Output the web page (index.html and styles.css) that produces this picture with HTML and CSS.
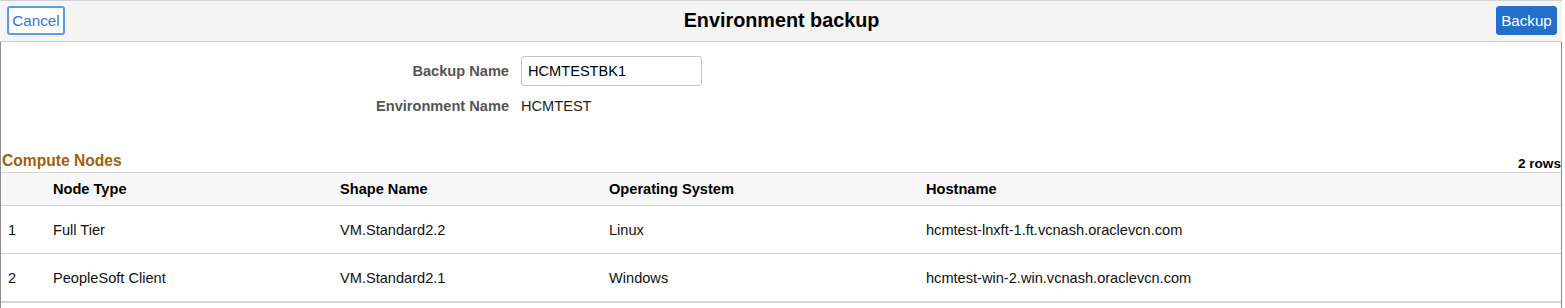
FILE: index.html
```html
<!DOCTYPE html>
<html>
<head>
<meta charset="utf-8">
<link rel="stylesheet" href="styles.css">
</head>
<body>
<div class="page">
  <header class="topbar">
    <button class="btn btn-cancel">Cancel</button>
    <h1 class="title">Environment backup</h1>
    <button class="btn btn-primary">Backup</button>
  </header>
  <main class="content">
    <div class="form">
      <label class="form-label">Backup Name</label>
      <div class="form-field"><input class="text-input" type="text" value="HCMTESTBK1"></div>
      <label class="form-label">Environment Name</label>
      <div class="form-field form-value">HCMTEST</div>
    </div>
    <div class="grid-head">
      <h2 class="section-title">Compute Nodes</h2>
      <span class="row-count">2 rows</span>
    </div>
    <table class="grid">
      <thead>
        <tr>
          <th class="c-idx"></th>
          <th class="c-type">Node Type</th>
          <th class="c-shape">Shape Name</th>
          <th class="c-os">Operating System</th>
          <th class="c-host">Hostname</th>
        </tr>
      </thead>
      <tbody>
        <tr>
          <td>1</td>
          <td>Full Tier</td>
          <td>VM.Standard2.2</td>
          <td>Linux</td>
          <td>hcmtest-lnxft-1.ft.vcnash.oraclevcn.com</td>
        </tr>
        <tr class="last">
          <td>2</td>
          <td>PeopleSoft Client</td>
          <td>VM.Standard2.1</td>
          <td>Windows</td>
          <td>hcmtest-win-2.win.vcnash.oraclevcn.com</td>
        </tr>
      </tbody>
    </table>
  </main>
</div>
</body>
</html>
```
FILE: styles.css
```css
html, body {
  margin: 0;
  padding: 0;
  background: #fff;
}
body {
  font-family: "Liberation Sans", Arial, sans-serif;
  font-size: 14.6px;
  color: #000;
}
.page {
  width: 1562px;
  height: 308px;
  box-sizing: border-box;
  overflow: hidden;
}
.topbar {
  height: 42px;
  box-sizing: border-box;
  background: #f4f4f4;
  border-top: 1px solid #d2d2d2;
  border-bottom: 1px solid #cfcfcf;
  display: flex;
  align-items: center;
  justify-content: space-between;
  padding: 0 5px 0 7px;
}
.title {
  margin: 0;
  font-size: 19.8px;
  font-weight: bold;
  color: #000;
  flex: 1;
  text-align: center;
  position: relative;
  top: -1px;
  left: 1px;
}
.btn {
  font-family: "Liberation Sans", Arial, sans-serif;
  font-size: 15.2px;
  height: 29px;
  border-radius: 3px;
  padding: 0;
  margin-top: -1px;
}
.btn-cancel {
  width: 58px;
  background: #fff;
  color: #3b74c9;
  border: 2px solid #5c9ae6;
}
.btn-primary {
  width: 61px;
  background: #236fca;
  color: #fff;
  border: 1px solid #236fca;
}
.content {
  border-left: 1px solid #8e8e8e;
  border-right: 1px solid #8a8a8a;
  height: 266px;
}
.form {
  display: grid;
  grid-template-columns: 508px auto;
  column-gap: 12px;
  row-gap: 5px;
  padding-top: 14px;
  align-items: center;
}
.form-label {
  text-align: right;
  font-weight: bold;
  color: #555;
}
.form-field {
  height: 30px;
  display: flex;
  align-items: center;
}
.text-input {
  width: 181px;
  height: 30px;
  box-sizing: border-box;
  border: 1px solid #c4c4c4;
  border-radius: 3px;
  padding: 0 6px;
  font-family: "Liberation Sans", Arial, sans-serif;
  font-size: 14.6px;
  color: #000;
}
.form-value {
  color: #222;
}
.grid-head {
  display: flex;
  justify-content: space-between;
  align-items: flex-end;
  margin-top: 31px;
  height: 20px;
}
.section-title {
  margin: 0 0 0 1px;
  font-size: 15.6px;
  font-weight: bold;
  color: #a05f10;
  line-height: 17px;
  position: relative;
  top: -3px;
}
.row-count {
  font-size: 13.6px;
  font-weight: bold;
  color: #000;
  line-height: 14px;
  position: relative;
  top: -1px;
}
.grid {
  width: 100%;
  border-collapse: collapse;
}
.grid th {
  background: #f7f7f7;
  height: 32px;
  text-align: left;
  font-weight: bold;
  padding: 0;
  border-top: 1px solid #d2d6da;
  border-bottom: 1px solid #d2d6da;
}
.grid td {
  height: 47px;
  padding: 0;
  border-bottom: 1px solid #d2d6da;
  color: #111;
}
.grid tr.last td {
  border-bottom: 2px solid #d2d6da;
}
.grid th:first-child,
.grid td:first-child {
  padding-left: 7px;
}
.c-idx { width: 45px; }
.c-type { width: 287px; }
.c-shape { width: 269px; }
.c-os { width: 317px; }
```
